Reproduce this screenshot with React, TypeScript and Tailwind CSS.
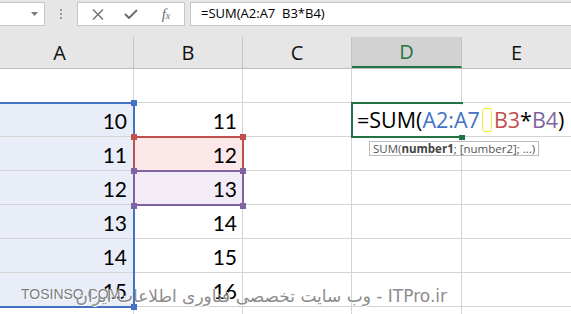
import React from "react";

const rows = [
  { a: "", b: "" },
  { a: "10", b: "11" },
  { a: "11", b: "12" },
  { a: "12", b: "13" },
  { a: "13", b: "14" },
  { a: "14", b: "15" },
  { a: "15", b: "16" },
  { a: "", b: "" },
];

function Handle({ className }: { className: string }) {
  return <div className={`absolute h-[6px] w-[6px] ${className}`} />;
}

export default function App() {
  return (
    <div className="h-[314px] w-[571px] overflow-hidden bg-white font-['Open_Sans',sans-serif]">
      {/* formula bar */}
      <div className="flex h-[37px] items-start bg-[#e6e6e6] pt-[2px]">
        <div className="flex h-[24px] w-[45px] items-center justify-end border border-l-0 border-[#c6c6c6] bg-white pr-[6px]">
          <svg width="7" height="4" viewBox="0 0 7 4">
            <path d="M0 0h7L3.5 4z" fill="#7a7a7a" />
          </svg>
        </div>
        <div className="flex h-[24px] w-[32px] flex-col items-center justify-center gap-[2px]">
          <span className="h-[2px] w-[2px] bg-[#9a9a9a]" />
          <span className="h-[2px] w-[2px] bg-[#9a9a9a]" />
          <span className="h-[2px] w-[2px] bg-[#9a9a9a]" />
        </div>
        <div className="flex h-[24px] w-[108px] items-center border border-[#c6c6c6] bg-white">
          <div className="flex w-[36px] justify-center pl-[4px]">
            <svg width="12" height="11" viewBox="0 0 12 11">
              <path d="M1 0.5l10 10M11 0.5l-10 10" stroke="#6e6e6e" strokeWidth="1.4" />
            </svg>
          </div>
          <div className="flex w-[34px] justify-center">
            <svg width="14" height="10" viewBox="0 0 14 10">
              <path d="M1 5l4 4L13 1" stroke="#6e6e6e" strokeWidth="2" fill="none" />
            </svg>
          </div>
          <div className="flex w-[36px] items-baseline justify-center font-['Liberation_Serif',serif] italic leading-none text-[#6e6e6e]">
            <span className="text-[15px]">f</span>
            <span className="text-[10px]">x</span>
          </div>
        </div>
        <div className="ml-[5px] flex h-[24px] flex-1 items-center border border-r-0 border-[#c6c6c6] bg-white pl-[10px] text-[13px] text-black">
          =SUM(A2:A7&nbsp; B3*B4)
        </div>
      </div>

      {/* column headers */}
      <div className="flex h-[32px] border-b border-[#bdbdbd] bg-[#e6e6e6] text-[20px] text-[#111]">
        <div className="flex w-[134px] items-center justify-center border-r border-[#c3c3c3] pr-[14px]">A</div>
        <div className="flex w-[109px] items-center justify-center border-r border-[#c3c3c3]">B</div>
        <div className="flex w-[109px] items-center justify-center border-r border-[#c3c3c3]">C</div>
        <div className="flex w-[110px] items-center justify-center border-r border-b-2 border-r-[#c3c3c3] border-b-[#217346] bg-[#d2d2d2] text-[#217346]">
          D
        </div>
        <div className="flex w-[109px] items-center justify-center">E</div>
      </div>

      {/* cells */}
      <div className="relative font-['Lato',sans-serif] text-[21px] text-black">
        {rows.map((r, i) => {
          const inA = i >= 1 && i <= 6;
          const bBg = i === 2 ? "bg-[#fce8e8]" : i === 3 ? "bg-[#f3ebf6]" : "bg-white";
          return (
            <div key={i} className="flex h-[34px]">
              <div
                className={`flex w-[134px] items-center justify-end border-r border-b border-[#d4d4d4] pt-[3px] pr-[6px] ${
                  inA ? "bg-[#e9edf7]" : "bg-white"
                }`}
              >
                {r.a}
              </div>
              <div className={`flex w-[109px] items-center justify-end border-r border-b border-[#d4d4d4] pt-[3px] pr-[5px] ${bBg}`}>
                {r.b}
              </div>
              <div className="w-[109px] border-r border-b border-[#d4d4d4]" />
              <div className="w-[110px] border-r border-b border-[#d4d4d4]" />
              <div className="w-[109px] border-b border-[#d4d4d4]" />
            </div>
          );
        })}

        {/* A2:A7 range */}
        <div className="absolute left-[-4px] top-[33px] h-[206px] w-[139px] border-2 border-[#4472c4]" />
        <Handle className="left-[131px] top-[31px] bg-[#4472c4]" />
        <Handle className="left-[131px] top-[235px] bg-[#4472c4]" />

        {/* B3 */}
        <div className="absolute left-[133px] top-[67px] h-[36px] w-[111px] border-2 border-[#c0504d]" />
        {/* B4 */}
        <div className="absolute left-[133px] top-[101px] h-[36px] w-[111px] border-2 border-[#8064a2]" />
        <Handle className="left-[131px] top-[65px] bg-[#c0504d]" />
        <Handle className="left-[240px] top-[65px] bg-[#c0504d]" />
        <Handle className="left-[131px] top-[99px] bg-[#8064a2]" />
        <Handle className="left-[240px] top-[99px] bg-[#8064a2]" />
        <Handle className="left-[131px] top-[134px] bg-[#8064a2]" />
        <Handle className="left-[240px] top-[134px] bg-[#8064a2]" />

        {/* D3 editing */}
        <div className="absolute left-[351px] top-[33px] h-[36px] w-[112px] border-2 border-r-0 border-[#217346]" />
        <Handle className="left-[459px] top-[65px] bg-[#217346]" />
        <div className="absolute left-[354px] top-[36px] flex h-[30px] w-[217px] items-center bg-white pl-[3px] font-['Open_Sans',sans-serif] text-[21.5px] whitespace-nowrap">
          <span>=SUM(</span>
          <span className="text-[#4472c4]">A2:A7</span>
          <span className="mx-[2px] inline-block h-[24px] w-[10px] rounded-[3px] border border-[#f5ea2c]" />
          <span className="text-[#c0504d]">B3</span>
          <span>*</span>
          <span className="text-[#8064a2]">B4</span>
          <span>)</span>
        </div>

        {/* tooltip */}
        <div className="absolute left-[369px] top-[72px] flex h-[15px] items-center border border-[#bdbdbd] bg-white px-[3px] font-['Open_Sans',sans-serif] text-[11.5px] leading-none text-[#555]">
          SUM(<b className="text-[#444]">number1</b>; [number2]; ...)
        </div>

        {/* watermark */}
        <div className="absolute left-[21px] top-[215px] font-['Liberation_Sans',sans-serif] text-[14px] text-[#7d7d7d] [text-shadow:1px_1px_0_#fff]">
          TOSINSO.COM
        </div>
        <div
          dir="rtl"
          className="absolute left-[85px] top-[215px] w-[362px] whitespace-nowrap font-['DejaVu_Sans',sans-serif] text-[17px] text-[#8c8c8c] [text-shadow:1px_1px_0_#fff]"
        >
          ITPro.ir - وب سایت تخصصی فناوری اطلاعات ایران
        </div>
      </div>
    </div>
  );
}
